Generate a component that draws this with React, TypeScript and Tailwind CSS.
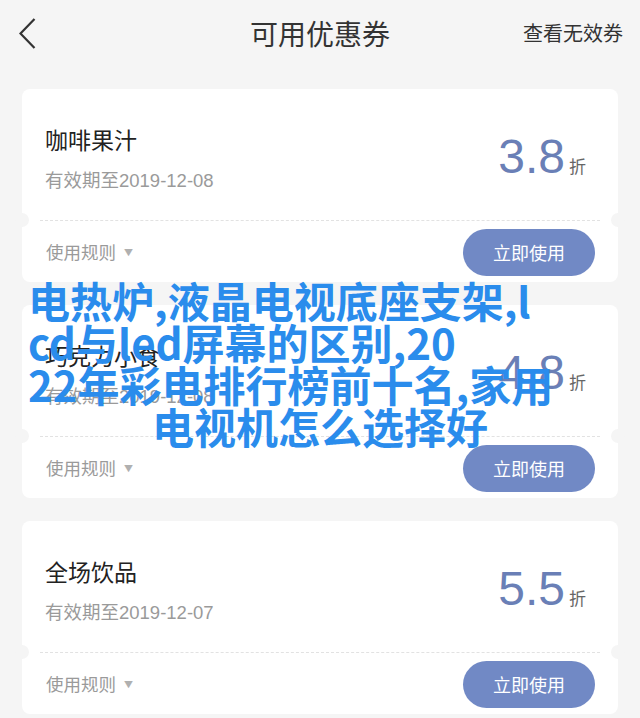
import React from "react";

type Coupon = {
  name: string;
  expires: string;
  discount: string;
};

const coupons: Coupon[] = [
  { name: "咖啡果汁", expires: "有效期至2019-12-08", discount: "3.8" },
  { name: "巧克力小食", expires: "有效期至2019-12-08", discount: "4.8" },
  { name: "全场饮品", expires: "有效期至2019-12-07", discount: "5.5" },
];

const cjk = { fontFamily: '"Noto Sans CJK SC", "Noto Sans", sans-serif' };
const latinFirst = { fontFamily: '"Liberation Sans", "Noto Sans CJK SC", sans-serif' };

function CouponCard({ coupon }: { coupon: Coupon }) {
  return (
    <div className="relative h-[193px] rounded-[8px] bg-white">
      {/* top part */}
      <div className="flex h-[131px] justify-between pl-[23px] pr-[32px]">
        <div className="flex flex-col pt-[35px]">
          <div className="text-[23px] leading-[30px] text-[#222]">{coupon.name}</div>
          <div className="mt-[15px] text-[18.5px] leading-[24px] text-[#9a9a9a]" style={latinFirst}>
            {coupon.expires}
          </div>
        </div>
        <div className="flex items-baseline pt-[44px]">
          <span
            className="text-[48px] leading-[48px] text-[#6a7fb6]"
            style={{ fontFamily: '"Liberation Sans", Arial, sans-serif' }}
          >
            {coupon.discount}
          </span>
          <span className="ml-[4px] text-[17px] text-[#666]">折</span>
        </div>
      </div>

      {/* dashed divider with notches */}
      <div className="mx-[18px] border-t border-dashed border-[#e2e2e2]" />
      <div className="absolute left-[-7px] top-[124px] h-[14px] w-[14px] rounded-full bg-[#f5f5f5]" />
      <div className="absolute right-[-7px] top-[124px] h-[14px] w-[14px] rounded-full bg-[#f5f5f5]" />

      {/* bottom part */}
      <div className="flex items-center justify-between pb-[6px] pl-[24px] pr-[23px] pt-[8px]">
        <div className="flex items-center text-[17.5px] text-[#9a9a9a]">
          使用规则
          <span className="ml-[8px] text-[9px] text-[#b0b0b0]">▼</span>
        </div>
        <button className="flex h-[47px] w-[132px] items-center justify-center rounded-full bg-[#7189c5] text-[18px] text-white">
          立即使用
        </button>
      </div>
    </div>
  );
}

export default function App() {
  return (
    <div className="relative min-h-screen overflow-hidden bg-[#f5f5f5]" style={cjk}>
      {/* header */}
      <div className="relative flex h-[66px] items-center justify-between pl-[19px] pr-[17px]">
        <svg width="17" height="31" viewBox="0 0 17 31" fill="none">
          <polyline points="15.5,1 1.5,15.5 15.5,30" stroke="#333" strokeWidth="2.2" />
        </svg>
        <div className="pointer-events-none absolute left-0 right-0 text-center text-[28px] text-[#333]">
          可用优惠券
        </div>
        <div className="text-[20px] text-[#333]">查看无效券</div>
      </div>

      <div className="flex flex-col gap-[23px] px-[22px] pt-[23px]">
        {coupons.map((c) => (
          <CouponCard key={c.name} coupon={c} />
        ))}
      </div>

      {/* overlaid title text */}
      <div className="absolute left-0 right-0 top-[279px] text-[42px] font-bold leading-[42px] text-[#2a8cec]">
        <div className="pl-[28px]">电热炉,液晶电视底座支架,l</div>
        <div className="pl-[28px]">cd与led屏幕的区别,20</div>
        <div className="pl-[28px]">22年彩电排行榜前十名,家用</div>
        <div className="text-center">电视机怎么选择好</div>
      </div>
    </div>
  );
}
